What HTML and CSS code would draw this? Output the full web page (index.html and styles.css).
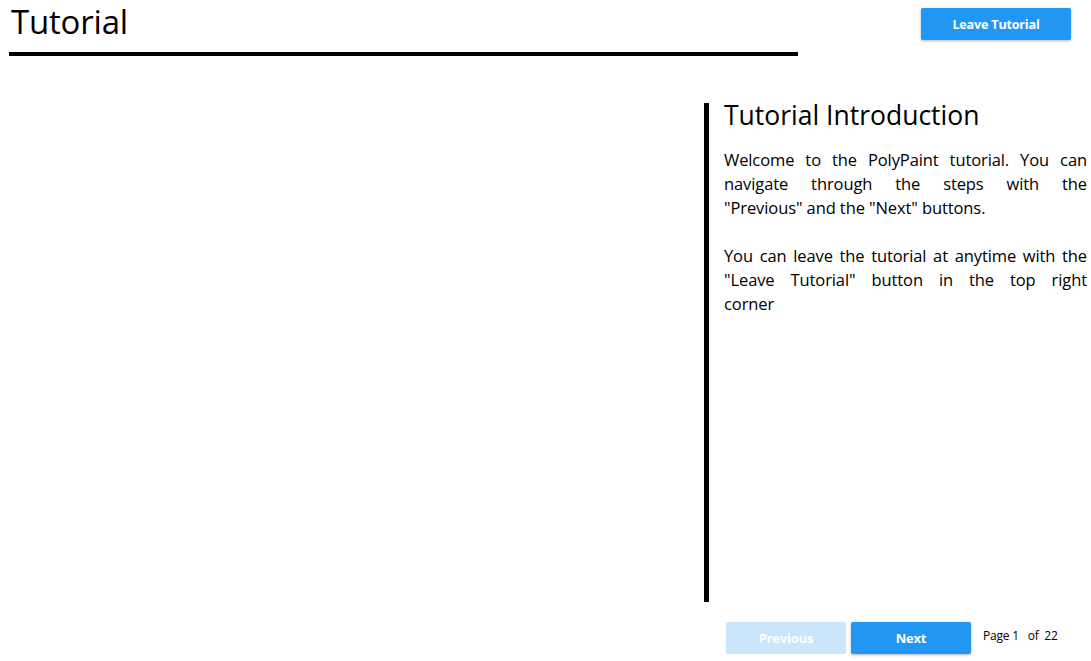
FILE: index.html
```html
<!DOCTYPE html>
<html>
<head>
<meta charset="utf-8">
<link rel="stylesheet" href="styles.css">
</head>
<body>
<div class="page">
  <header class="top">
    <div class="title-block">
      <h1 class="title">Tutorial</h1>
      <div class="title-rule"></div>
    </div>
    <button class="btn btn-primary leave">Leave Tutorial</button>
  </header>
  <main class="content">
    <div class="canvas-area"></div>
    <section class="panel">
      <h2 class="panel-title">Tutorial Introduction</h2>
      <p class="panel-text">
        <span class="line">Welcome to the PolyPaint tutorial. You can</span>
        <span class="line">navigate through the steps with the</span>
        <span class="line last">"Previous" and the "Next" buttons.</span>
      </p>
      <p class="panel-text">
        <span class="line">You can leave the tutorial at anytime with the</span>
        <span class="line">"Leave Tutorial" button in the top right</span>
        <span class="line last">corner</span>
      </p>
    </section>
  </main>
  <footer class="nav">
    <button class="btn btn-disabled">Previous</button>
    <button class="btn btn-primary">Next</button>
    <span class="pager">Page 1&nbsp;&nbsp; of&nbsp; 22</span>
  </footer>
</div>
</body>
</html>
```
FILE: styles.css
```css
html, body {
  margin: 0;
  padding: 0;
  background: #fff;
}
body {
  font-family: "Open Sans", "Noto Sans", sans-serif;
  color: #000;
  width: 1091px;
  height: 661px;
  overflow: hidden;
}
.page {
  display: flex;
  flex-direction: column;
}
.top {
  display: flex;
  justify-content: space-between;
  align-items: flex-start;
  padding-left: 9px;
  padding-right: 20px;
  height: 103px;
}
.title-block {
  width: 789px;
  display: flex;
  flex-direction: column;
}
.title {
  margin: 0;
  padding-left: 2px;
  font-weight: 400;
  font-size: 33px;
  line-height: 43px;
  height: 52px;
  letter-spacing: -0.2px;
}
.title-rule {
  height: 4px;
  background: #000;
}
.btn {
  border: none;
  border-radius: 2px;
  font-family: "Open Sans", "Noto Sans", sans-serif;
  font-weight: 700;
  font-size: 13px;
  color: #fff;
  width: 120px;
  height: 32px;
  padding: 0 0 1px 0;
  letter-spacing: -0.2px;
}
.btn-primary {
  background: #2196f3;
  box-shadow: 0 1px 3px rgba(0,0,0,0.3);
}
.btn-disabled {
  background: #cbe5fb;
}
.leave {
  width: 150px;
  height: 32px;
  margin-top: 8px;
  font-size: 12.6px;
  padding-top: 1px;
}
.content {
  display: flex;
  height: 499px;
}
.canvas-area {
  width: 704px;
}
.panel {
  border-left: 5px solid #000;
  padding-left: 15px;
  width: 363px;
}
.panel-title {
  margin: 0 0 19px 0;
  font-weight: 400;
  font-size: 26.5px;
  line-height: 26px;
  position: relative;
  top: -1px;
}
.panel-text {
  margin: 0 0 24px 0;
  font-size: 16.5px;
  line-height: 24px;
  letter-spacing: -0.1px;
}
.line {
  display: block;
  text-align: justify;
  text-align-last: justify;
  white-space: nowrap;
}
.line.last {
  text-align-last: left;
}
.nav {
  display: flex;
  align-items: flex-start;
  padding-left: 726px;
  padding-top: 20px;
  gap: 5px;
}
.pager {
  font-size: 12px;
  margin-left: 7px;
  margin-top: 5px;
  letter-spacing: -0.2px;
}
```
